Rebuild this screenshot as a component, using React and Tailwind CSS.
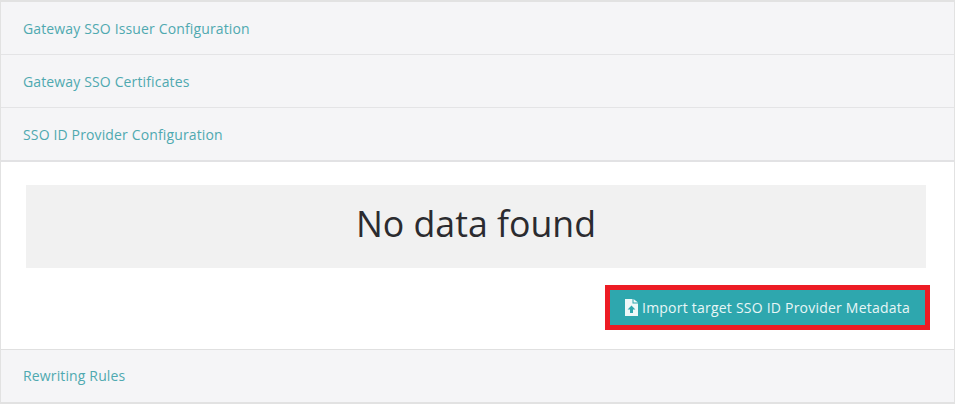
export default function App() {
  const Row = ({ label, cls = "" }) => (
    <div className={`h-[53px] pl-[22px] flex items-center bg-[#f5f5f7] text-[14px] text-[#4fa9b0] ${cls}`}>
      <span className="tracking-[0.14px]">{label}</span>
    </div>
  );
  return (
    <div className="w-[955px] h-[404px] overflow-hidden bg-white font-['Open_Sans',sans-serif] border-t-2 border-b-2 border-l border-r border-[#e2e2e2]">
      <Row label="Gateway SSO Issuer Configuration" cls="border-b border-[#e4e4e6]" />
      <Row label="Gateway SSO Certificates" cls="border-b border-[#e4e4e6]" />
      <Row label="SSO ID Provider Configuration" cls="border-b-2 border-[#e2e2e4] h-[54px]" />
      <div className="h-[188px] pl-[25px] pr-[28px] pt-[23px] bg-white border-b border-[#e0e0e0] flex flex-col">
        <div className="h-[83px] bg-[#f1f1f1] flex items-center justify-center pb-[5px] text-[35.7px] text-[#2b2b2f]">
          No data found
        </div>
        <div className="flex justify-end mt-[17px] -mr-[4px]">
          <button className="w-[325px] h-[45px] border-[5px] border-[#ed1c24] bg-[#2ea7ae] flex items-center justify-center gap-[4px] text-[14px] text-[#e8f6f6]">
            <svg width="13" height="17" viewBox="0 0 13 17" className="shrink-0">
              <path fillRule="evenodd" fill="#eef8f8" d="M0 0h7.5v4.5H13V17H0zM8.5 0L13 3.5H8.5zM6.5 6.5L2.6 10.6H5V14h3v-3.4h2.4z" />
            </svg>
            <span className="tracking-[0.22px]">Import target SSO ID Provider Metadata</span>
          </button>
        </div>
      </div>
      <Row label="Rewriting Rules" cls="pb-[2px]" />
    </div>
  );
}
